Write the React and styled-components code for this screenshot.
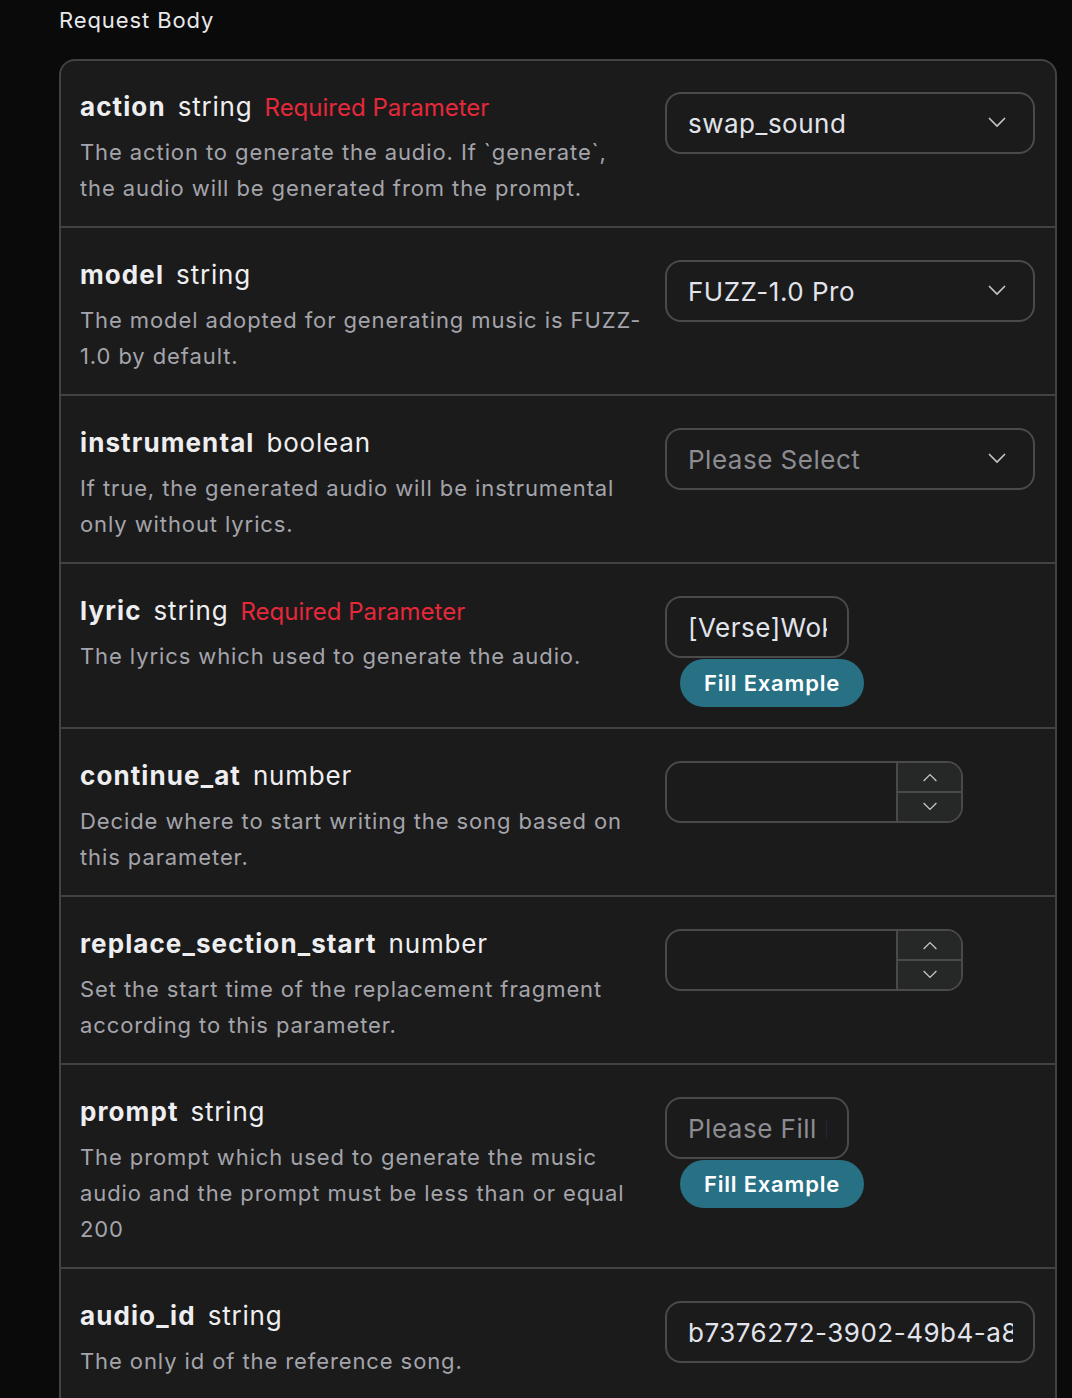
import React from "react";
import styled, { createGlobalStyle } from "styled-components";

const GlobalStyle = createGlobalStyle`
  html, body {
    margin: 0;
    background: #0a0a0a;
    font-family: Inter, "Noto Sans", "Liberation Sans", sans-serif;
  }
`;

const Page = styled.div`
  min-height: 1398px;
  padding: 0 15px 0 59px;
  display: flex;
  flex-direction: column;
`;

const SectionTitle = styled.h2`
  margin: 0;
  height: 59px;
  line-height: 41px;
  font-size: 22px;
  font-weight: 400;
  letter-spacing: 0.9px;
  color: #e8e8ea;
`;

const Card = styled.div`
  flex: 1;
  background: #1b1b1b;
  border: 2px solid #424242;
  border-bottom: none;
  border-radius: 16px 16px 0 0;
  overflow: hidden;
`;

const Row = styled.div`
  display: flex;
  gap: 19px;
  padding: ${(p) => (p.$first ? 31 : 32)}px 20px 20px 19px;
  border-top: ${(p) => (p.$first ? "none" : "2px solid #424242")};
`;

const Left = styled.div`
  width: 566px;
  flex: none;
`;

const Title = styled.div`
  display: flex;
  align-items: baseline;
  gap: 12px;
  height: 30px;
  line-height: 30px;
  color: #eeeef1;
  white-space: nowrap;
`;

const Name = styled.span`
  font-size: 26px;
  font-weight: 700;
  letter-spacing: 1.1px;
`;

const Type = styled.span`
  font-size: 26px;
  font-weight: 400;
  letter-spacing: 0.8px;
`;

const Required = styled.span`
  font-size: 24px;
  color: #e5283a;
`;

const Desc = styled.p`
  margin: 12px 0 0;
  font-size: 22px;
  line-height: 36px;
  letter-spacing: 0.9px;
  color: #a4a4ab;
`;

const Right = styled.div`
  display: flex;
  flex-direction: column;
  align-items: flex-start;
  width: 370px;
`;

const Field = styled.div`
  box-sizing: border-box;
  display: flex;
  align-items: center;
  width: ${(p) => p.$w || 370}px;
  height: 62px;
  padding: 0 ${(p) => (p.$select ? 26 : 20)}px 0 21px;
  border: 2px solid #4a4a4a;
  border-radius: 16px;
  font-size: 26px;
  letter-spacing: 0.5px;
  color: ${(p) => (p.$muted ? "#8c8c92" : "#e2e4ec")};
  overflow: hidden;
  white-space: nowrap;
`;

const Value = styled.span`
  flex: 1;
  overflow: hidden;
`;

const FillButton = styled.button`
  margin: 1px 0 0 15px;
  width: 184px;
  height: 48px;
  border: none;
  border-radius: 24px;
  background: #287185;
  color: #fff;
  font-family: inherit;
  font-size: 22px;
  font-weight: 600;
  letter-spacing: 0.8px;
`;

const NumberBox = styled.div`
  box-sizing: border-box;
  display: flex;
  width: 298px;
  height: 62px;
  border: 2px solid #4a4a4a;
  border-radius: 16px;
  overflow: hidden;
`;

const NumberInput = styled.div`
  flex: 1;
`;

const Stepper = styled.div`
  display: flex;
  flex-direction: column;
  width: 63px;
  border-left: 2px solid #4a4a4a;
  background: #262828;
`;

const Step = styled.div`
  flex: 1;
  display: flex;
  align-items: center;
  justify-content: center;
  border-top: ${(p) => (p.$down ? "2px solid #4a4a4a" : "none")};
`;

const Chevron = ({ up, size = 20 }) => (
  <svg width={size} height={size / 2 + 2} viewBox="0 0 20 12" fill="none">
    <path
      d={up ? "M2 11 L10 3 L18 11" : "M2 1 L10 9 L18 1"}
      stroke="#c8c8cc"
      strokeWidth="1.6"
    />
  </svg>
);

const Select = ({ value, muted }) => (
  <Field $select $muted={muted}>
    <Value>{value}</Value>
    <Chevron />
  </Field>
);

const NumberField = () => (
  <NumberBox>
    <NumberInput />
    <Stepper>
      <Step>
        <Chevron up size={16} />
      </Step>
      <Step $down>
        <Chevron size={16} />
      </Step>
    </Stepper>
  </NumberBox>
);

const params = [
  {
    name: "action",
    type: "string",
    required: true,
    desc: "The action to generate the audio. If `generate`, the audio will be generated from the prompt.",
    control: <Select value="swap_sound" />,
  },
  {
    name: "model",
    type: "string",
    desc: "The model adopted for generating music is FUZZ-1.0 by default.",
    control: <Select value="FUZZ-1.0 Pro" />,
  },
  {
    name: "instrumental",
    type: "boolean",
    desc: "If true, the generated audio will be instrumental only without lyrics.",
    control: <Select value="Please Select" muted />,
  },
  {
    name: "lyric",
    type: "string",
    required: true,
    desc: "The lyrics which used to generate the audio.",
    control: (
      <>
        <Field $w={184}>
          <Value>[Verse]Woke up in a dream</Value>
        </Field>
        <FillButton>Fill Example</FillButton>
      </>
    ),
  },
  {
    name: "continue_at",
    type: "number",
    desc: "Decide where to start writing the song based on this parameter.",
    control: <NumberField />,
  },
  {
    name: "replace_section_start",
    type: "number",
    desc: "Set the start time of the replacement fragment according to this parameter.",
    control: <NumberField />,
  },
  {
    name: "prompt",
    type: "string",
    desc: "The prompt which used to generate the music audio and the prompt must be less than or equal 200",
    control: (
      <>
        <Field $w={184} $muted>
          <Value>Please Fill In</Value>
        </Field>
        <FillButton>Fill Example</FillButton>
      </>
    ),
  },
  {
    name: "audio_id",
    type: "string",
    desc: "The only id of the reference song.",
    control: (
      <Field>
        <Value>b7376272-3902-49b4-a8d5-2b1f0b3c7e11</Value>
      </Field>
    ),
  },
];

export default function App() {
  return (
    <Page>
      <GlobalStyle />
      <SectionTitle>Request Body</SectionTitle>
      <Card>
        {params.map((p, i) => (
          <Row key={p.name} $first={i === 0}>
            <Left>
              <Title>
                <Name>{p.name}</Name>
                <Type>{p.type}</Type>
                {p.required && <Required>Required Parameter</Required>}
              </Title>
              <Desc>{p.desc}</Desc>
            </Left>
            <Right>{p.control}</Right>
          </Row>
        ))}
      </Card>
    </Page>
  );
}
